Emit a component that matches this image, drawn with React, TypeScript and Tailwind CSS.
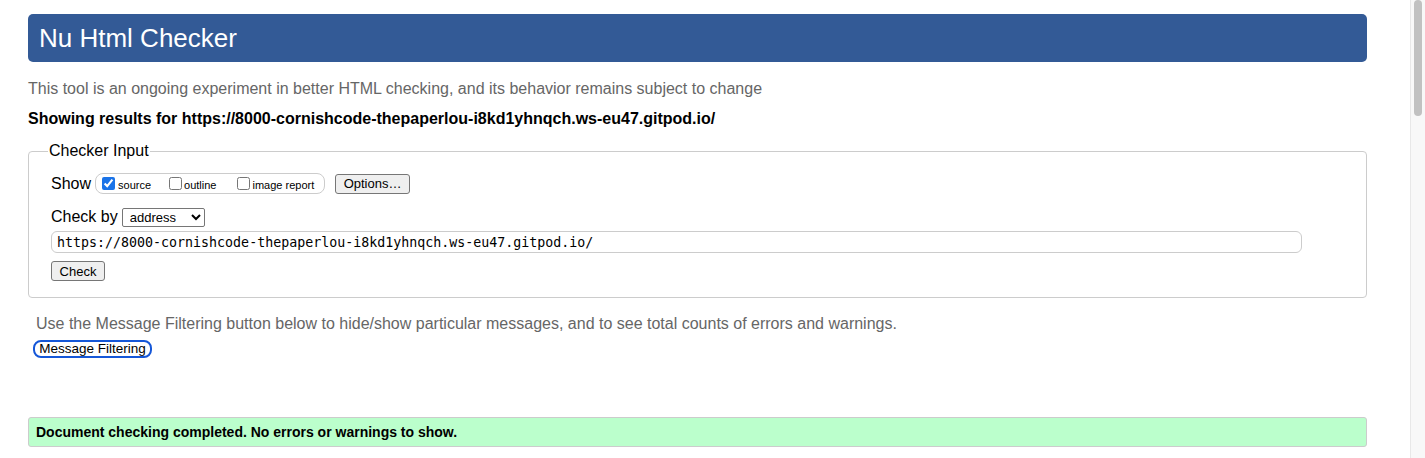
import { useState } from 'react';

const url = 'https://8000-cornishcode-thepaperlou-i8kd1yhnqch.ws-eu47.gitpod.io/';

export default function App() {
  const [show, setShow] = useState({ source: true, outline: false, image: false });
  const [address, setAddress] = useState(url);

  return (
    <div className="flex h-[458px] w-[1425px] overflow-hidden bg-white font-['Liberation_Sans',Arial,sans-serif] text-black">
      <main className="flex-1 pl-[28px] pr-[43px] pt-[14px]">
        <header className="flex h-[48px] items-center rounded-[5px] bg-[#335a96] px-[11px]">
          <h1 className="text-[26px] leading-none text-white">Nu Html Checker</h1>
        </header>

        <p className="mt-[17px] text-[16px] leading-[20px] text-[#666]">
          This tool is an ongoing experiment in better HTML checking, and its behavior remains subject to change
        </p>
        <p className="mt-[10px] text-[16px] font-bold leading-[20px]">Showing results for {url}</p>

        <fieldset className="mt-[12px] h-[157px] rounded-[4px] border border-[#ccc] px-[22px] pt-[12px]">
          <legend className="ml-[-3px] px-[1px] text-[16px] leading-[20px]">Checker Input</legend>

          <div className="flex items-center">
            <span className="text-[16px] leading-[20px]">Show</span>
            <div className="ml-[4px] flex h-[21px] w-[230px] items-center rounded-[8px] border border-[#ccc] pl-[6px] text-[11px]">
              <label className="flex items-center">
                <input
                  type="checkbox"
                  checked={show.source}
                  onChange={() => setShow({ ...show, source: !show.source })}
                  className="m-0 h-[13px] w-[13px] accent-[#1a73e8]"
                />
                <span className="ml-[3px] mt-[3px]">source</span>
              </label>
              <label className="ml-[18px] flex items-center">
                <input
                  type="checkbox"
                  checked={show.outline}
                  onChange={() => setShow({ ...show, outline: !show.outline })}
                  className="m-0 h-[13px] w-[13px]"
                />
                <span className="ml-[2px] mt-[3px]">outline</span>
              </label>
              <label className="ml-[21px] flex items-center">
                <input
                  type="checkbox"
                  checked={show.image}
                  onChange={() => setShow({ ...show, image: !show.image })}
                  className="m-0 h-[13px] w-[13px]"
                />
                <span className="ml-[2px] mt-[3px]">image report</span>
              </label>
            </div>
            <button className="ml-[10px] h-[20px] w-[75px] rounded-[3px] border border-[#767676] bg-[#efefef] text-[13px] leading-none">
              Options…
            </button>
          </div>

          <div className="mt-[13px] flex items-center">
            <span className="text-[16px] leading-[20px]">Check by</span>
            <select className="ml-[4px] h-[19px] w-[83px] rounded-[2px] border border-[#767676] bg-white pl-[3px] text-[13px] leading-none">
              <option>address</option>
              <option>file upload</option>
              <option>text input</option>
            </select>
          </div>

          <input
            value={address}
            onChange={(e) => setAddress(e.target.value)}
            className="mt-[4px] block h-[22px] w-[1251px] rounded-[6px] border border-[#ccc] px-[5px] font-['DejaVu_Sans_Mono',monospace] text-[13.3px] outline-none"
          />

          <button className="mt-[8px] h-[20px] w-[54px] rounded-[3px] border border-[#767676] bg-[#efefef] text-[13px] leading-none">
            Check
          </button>
        </fieldset>

        <p className="mt-[16px] pl-[8px] text-[16px] leading-[20px] text-[#666]">
          Use the Message Filtering button below to hide/show particular messages, and to see total counts of errors and warnings.
        </p>
        <button className="ml-[5px] mt-[6px] h-[18px] w-[119px] rounded-[8px] border-2 border-[#1557d8] bg-white text-[13.5px] leading-none">
          Message Filtering
        </button>

        <div className="mt-[57px] flex h-[30px] items-center rounded-[3px] border border-[#ccc] bg-[#bbffcc] px-[7px]">
          <p className="text-[14px] font-bold">Document checking completed. No errors or warnings to show.</p>
        </div>
      </main>

      <div className="w-[15px] border-l border-[#e8e8e8] bg-[#f8f8f8] px-[3px]">
        <div className="h-[116px] rounded-full bg-[#c1c1c1]" />
      </div>
    </div>
  );
}
